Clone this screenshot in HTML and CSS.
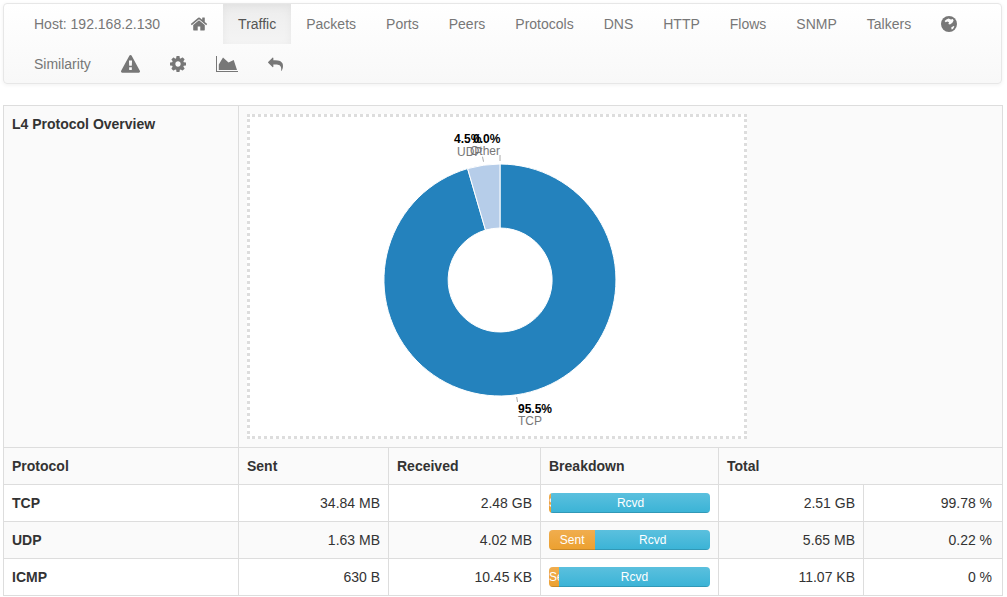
FILE: index.html
```html
<!DOCTYPE html>
<html lang="en">
<head>
<meta charset="UTF-8">
<meta name="viewport" content="width=device-width, initial-scale=1.0">
<title>Host: 192.168.2.130</title>
<link rel="stylesheet" href="styles.css">
</head>
<body>

<nav class="navbar">
    <ul class="nav">
        <li><a href="#">Host: 192.168.2.130</a></li>
        <li><a href="#"><svg class="icon" width="18" height="18" viewBox="0 0 1792 1792"><path d="M1472 992v480q0 26-19 45t-45 19h-384v-384h-256v384h-384q-26 0-45-19t-19-45v-480q0-1 .5-3t.5-3l575-474 575 474q1 2 1 6zm223-69l-62 74q-8 9-21 11h-3q-13 0-21-7l-692-577-692 577q-12 8-24 7-13-2-21-11l-62-74q-8-10-7-23.5t11-21.5l719-599q32-26 76-26t76 26l244 204v-195q0-14 9-23t23-9h192q14 0 23 9t9 23v408l219 182q10 8 11 21.5t-7 23.5z"/></svg></a></li>
        <li class="active"><a href="#">Traffic</a></li>
        <li><a href="#">Packets</a></li>
        <li><a href="#">Ports</a></li>
        <li><a href="#">Peers</a></li>
        <li><a href="#">Protocols</a></li>
        <li><a href="#">DNS</a></li>
        <li><a href="#">HTTP</a></li>
        <li><a href="#">Flows</a></li>
        <li><a href="#">SNMP</a></li>
        <li><a href="#">Talkers</a></li>
        <li><a href="#"><svg class="icon" width="16" height="16" viewBox="0 0 16 16"><circle cx="8" cy="8" r="8"/><path fill="#fbfbfb" d="M7.500 2.600 10 3.400l1.800-.4.800 1.600-1.200 2.200L9 8.400l-1.600-.4L8 6.200 6.400 5.400 4.600 6.200l-1-1.200L5.400 3.600zM10.200 11.400l2.400-1.400.8.600-1.400 2.400-1.400.4z"/></svg></a></li>
        <li><a href="#">Similarity</a></li>
        <li><a href="#"><svg class="icon" width="19" height="19" viewBox="0 0 1792 1792"><path d="M1024 1375v-190q0-14-9.500-23.500t-22.500-9.500h-192q-13 0-22.500 9.500t-9.500 23.500v190q0 14 9.500 23.500t22.500 9.500h192q13 0 22.500-9.500t9.500-23.500zm-2-374l18-459q0-12-10-19-13-11-24-11h-220q-11 0-24 11-10 7-10 21l17 457q0 10 10 16.500t24 6.500h185q14 0 23.500-6.500t10.500-16.500zm-14-934l768 1408q35 63-2 126-17 29-46.500 46t-63.500 17h-1536q-34 0-63.500-17t-46.500-46q-37-63-2-126l768-1408q17-31 47-49t65-18 65 18 47 49z"/></svg></a></li>
        <li><a href="#"><svg class="icon" width="16" height="16" viewBox="128 128 1536 1536"><path d="M1152 896q0-106-75-181t-181-75-181 75-75 181 75 181 181 75 181-75 75-181zm512-109v222q0 12-8 23t-20 13l-185 28q-19 54-39 91 35 50 107 138 10 12 10 25t-9 23q-27 37-99 108t-94 71q-12 0-26-9l-138-108q-44 23-91 38-16 136-29 186-7 28-36 28h-222q-14 0-24.500-8.500t-11.500-21.500l-28-184q-49-16-90-37l-141 107q-10 9-25 9-14 0-25-11-126-114-165-168-7-10-7-23 0-12 8-23 15-21 51-66.500t54-70.500q-27-50-41-99l-183-27q-13-2-21-12.500t-8-23.500v-222q0-12 8-23t19-13l186-28q14-46 39-92-40-57-107-138-10-12-10-24 0-10 9-23 26-36 98.500-107.500t94.500-71.500q13 0 26 10l138 107q44-23 91-38 16-136 29-186 7-28 36-28h222q14 0 24.500 8.500t11.500 21.500l28 184q49 16 90 37l142-107q9-9 24-9 13 0 25 10 129 119 165 170 7 8 7 22 0 12-8 23-15 21-51 66.500t-54 70.500q26 50 41 98l183 28q13 2 21 12.500t8 23.500z"/></svg></a></li>
        <li><a href="#"><svg class="icon" width="22" height="16" viewBox="0 0 22 16"><path d="M0 0h1v15h21v1H0z"/><path d="M2.800 14V8.500L7 1.500l5.500 5L17.700 4 21 14z"/></svg></a></li>
        <li><a href="#"><svg class="icon" width="15" height="15" viewBox="0 0 1792 1792"><path d="M1792 1120q0 166-127 451-3 7-10.500 24t-13.500 30-13 22q-12 17-28 17-15 0-23.500-10t-8.500-25q0-9 2.500-26.500t2.500-23.500q5-68 5-123 0-101-17.500-181t-48.500-138.500-80-101-105.500-69.500-133-42.500-154-21.500-175.500-6h-224v256q0 26-19 45t-45 19-45-19l-512-512q-19-19-19-45t19-45l512-512q19-19 45-19t45 19 19 45v256h224q713 0 875 403 53 134 53 333z"/></svg></a></li>
    </ul>
</nav>

<table class="stats">
    <colgroup>
        <col class="col-proto"><col class="col-sent"><col class="col-rcvd"><col class="col-break"><col class="col-total"><col class="col-pct">
    </colgroup>
    <tr class="overview">
        <th>L4 Protocol Overview</th>
        <td colspan="5">
            <svg class="chart" width="500" height="325" viewBox="0 0 500 325">
                <path class="slice tcp" d="M253 50A116 116 0 1 1 220.600 54.600L238.500 116.100A52 52 0 1 0 253 114Z"/>
                <path class="slice udp" d="M220.600 54.600A116 116 0 0 1 253 50V114A52 52 0 0 0 238.500 116.100Z"/>
                <path class="leader" d="M235.500 42.700 236.500 47.700M253 41V47M269.700 283 270.500 288"/>
                <text class="pct" x="207" y="29">4.5%</text>
                <text class="name" x="210" y="42">UDP</text>
                <text class="pct" x="226" y="29">0.0%</text>
                <text class="name" x="223" y="41">Other</text>
                <text class="pct" x="271" y="299">95.5%</text>
                <text class="name" x="271" y="311">TCP</text>
            </svg>
        </td>
    </tr>
    <tr class="head">
        <th>Protocol</th><th>Sent</th><th>Received</th><th>Breakdown</th><th colspan="2">Total</th>
    </tr>
    <tr>
        <th>TCP</th>
        <td class="num">34.84 MB</td>
        <td class="num">2.48 GB</td>
        <td><div class="progress"><div class="bar sent" style="width:1.4%">Sent</div><div class="bar rcvd">Rcvd</div></div></td>
        <td class="num">2.51 GB</td>
        <td class="num share">99.78 %</td>
    </tr>
    <tr class="alt">
        <th>UDP</th>
        <td class="num">1.63 MB</td>
        <td class="num">4.02 MB</td>
        <td><div class="progress"><div class="bar sent" style="width:28.8%">Sent</div><div class="bar rcvd">Rcvd</div></div></td>
        <td class="num">5.65 MB</td>
        <td class="num share">0.22 %</td>
    </tr>
    <tr>
        <th>ICMP</th>
        <td class="num">630 B</td>
        <td class="num">10.45 KB</td>
        <td><div class="progress"><div class="bar sent" style="width:6.2%">Sent</div><div class="bar rcvd">Rcvd</div></div></td>
        <td class="num">11.07 KB</td>
        <td class="num share">0 %</td>
    </tr>
</table>

</body>
</html>
```
FILE: styles.css
```css
body {
    font-family: "Liberation Sans", Arial, sans-serif;
    font-size: 14px;
    line-height: 20px;
    color: #333;
    margin: 0;
    padding: 3px 5px 0 3px;
    background-color: #fff;
}
.navbar {
    height: 81px;
    box-sizing: border-box;
    margin-bottom: 21px;
    border: 1px solid #e7e7e7;
    border-radius: 4px;
    background-image: linear-gradient(to bottom, #fff, #f8f8f8);
    box-shadow: 0 1px 4px rgba(0, 0, 0, 0.06);
}
.nav {
    display: flex;
    flex-wrap: wrap;
    margin: 0;
    padding: 0 0 0 15px;
    list-style: none;
}
.nav a {
    display: flex;
    align-items: center;
    height: 40px;
    box-sizing: border-box;
    padding: 0 15px;
    color: #777;
    text-decoration: none;
}
.nav .active a {
    color: #555;
    background-image: linear-gradient(to bottom, #ededed, #f4f4f4);
    box-shadow: inset 0 3px 9px rgba(0, 0, 0, 0.05);
}
.icon {
    display: block;
    fill: #777;
}
.stats {
    width: 999px;
    table-layout: fixed;
    border-collapse: collapse;
    background-color: #fff;
}
.col-proto { width: 235px; }
.col-sent { width: 150px; }
.col-rcvd { width: 152px; }
.col-break { width: 178px; }
.col-total { width: 145px; }
.col-pct { width: 139px; }
.stats th, .stats td {
    padding: 8px;
    border: 1px solid #ddd;
    text-align: left;
    vertical-align: top;
    box-sizing: border-box;
}
.stats th {
    font-weight: bold;
}
.overview th, .overview td, .head th, .alt th, .alt td {
    background-color: #fafafa;
}
.stats .num {
    text-align: right;
}
.stats .share {
    padding-right: 10px;
}
.chart {
    display: block;
    background-color: #fff;
    outline: 3px dotted #ddd;
    outline-offset: -3px;
}
.chart .slice {
    stroke: #fff;
    stroke-width: 1;
}
.chart .tcp {
    fill: #2482bd;
}
.chart .udp {
    fill: #b6cde9;
}
.chart .pct {
    font-size: 12px;
    font-weight: bold;
    fill: #000;
}
.chart .name {
    font-size: 12px;
    fill: #777;
}
.chart .leader {
    fill: none;
    stroke: #aaa;
    stroke-width: 1;
}
.progress {
    display: flex;
    height: 20px;
    overflow: hidden;
    border-radius: 4px;
    font-size: 12px;
    color: #fff;
    text-align: center;
    box-shadow: inset 0 1px 2px rgba(0, 0, 0, 0.1);
}
.bar {
    overflow: hidden;
    white-space: nowrap;
    box-shadow: inset 0 -1px 0 rgba(0, 0, 0, 0.15);
}
.sent {
    background-image: linear-gradient(to bottom, #f0ad4e, #eca02f);
}
.rcvd {
    flex: 1;
    background-image: linear-gradient(to bottom, #5bc0de, #3ab3d6);
}
```
